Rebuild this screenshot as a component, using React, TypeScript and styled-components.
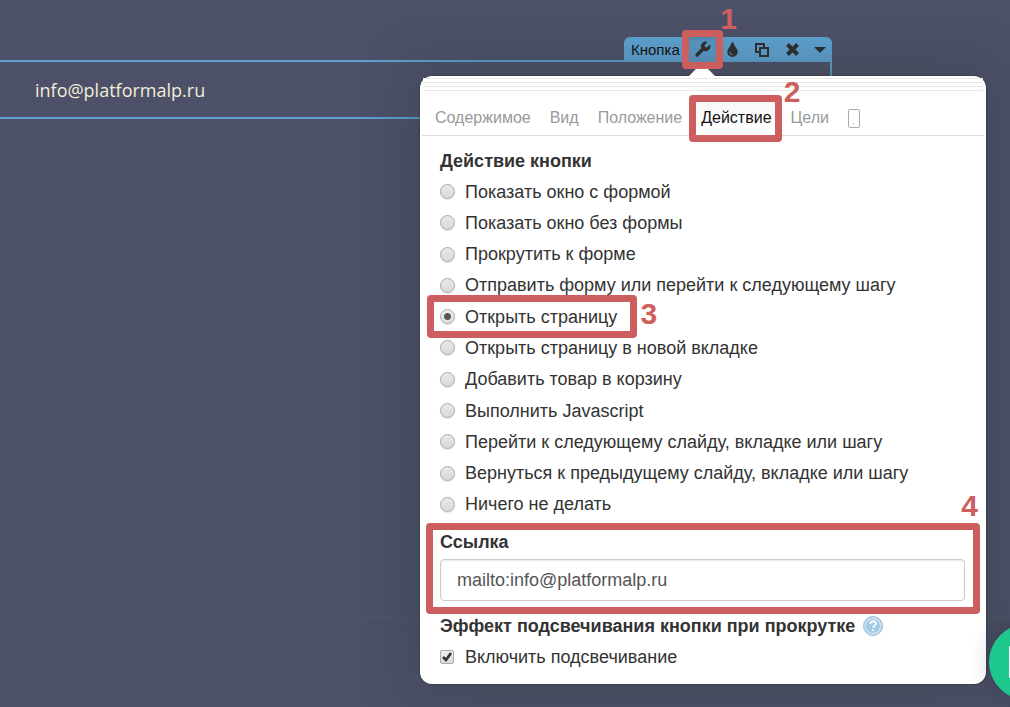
import React, { useState } from 'react';
import styled, { createGlobalStyle } from 'styled-components';
import { FaTint } from 'react-icons/fa';

const sans = '"Liberation Sans", Arial, sans-serif';
const accent = '#5d9fcd';
const marker = '#cc5f5d';

const GlobalStyle = createGlobalStyle`
  *, *::before, *::after { box-sizing: border-box; }
  body { margin: 0; background: #4c5068; font-family: ${sans}; color: #333; }
  button, input { font: inherit; color: inherit; }
`;

const Page = styled.main`
  position: relative;
  min-height: 100vh;
  padding-top: 60px;
  overflow: hidden;
  background: #4c5068;
`;

const SelectedBlock = styled.section`
  position: relative;
  display: flex;
  align-items: center;
  height: 59px;
  margin-right: 178px;
  padding-left: 35px;
  border: solid ${accent};
  border-width: 2px 2px 2px 0;
`;

const MailLink = styled.a`
  color: #f3ecd8;
  font: 18px/24px "Open Sans", "Noto Sans", sans-serif;
  text-decoration: none;
`;

const SectionEdge = styled.hr`
  height: 4px;
  margin: 497px 0 0;
  border: solid #50556a;
  border-width: 1px 0;
`;

const Toolbar = styled.div`
  position: absolute;
  right: -2px;
  bottom: 100%;
  display: flex;
  align-items: center;
  height: 25px;
  padding-left: 7px;
  border-radius: 6px 6px 0 0;
  background: ${accent};
  color: #111;
  font-size: 15px;
`;

const ToolName = styled.span`
  width: 56px;
`;

const ToolButton = styled.button<{ $pressed?: boolean; $narrow?: boolean }>`
  position: relative;
  display: flex;
  align-items: center;
  justify-content: center;
  width: ${p => (p.$narrow ? 25 : 30)}px;
  height: 25px;
  padding: 0;
  border: 0;
  background: ${p => (p.$pressed ? '#5798c5' : 'transparent')};
  box-shadow: ${p => (p.$pressed ? 'inset 0 2px 4px #4a85ad' : 'none')};
  color: #2d2d2d;
`;

const Popover = styled.section`
  position: absolute;
  top: 76px;
  right: 24px;
  width: 566px;
  padding-bottom: 13px;
  border-radius: 12px;
  background: #fff;
  box-shadow: 0 0 50px rgba(50, 60, 60, 0.5), 0 0 2px rgba(0, 0, 0, 0.5);
`;

const Arrow = styled.svg`
  position: absolute;
  top: -12px;
  left: 268px;
`;

const DragHandle = styled.div`
  height: 15px;
  margin: 0 3px;
  padding-top: 2px;
  background: repeating-linear-gradient(#e9e9e9 0 1px, #fff 1px 4px) content-box;
`;

const Tabs = styled.nav`
  display: flex;
  gap: 1px;
  height: 45px;
  margin: 0 2px;
  padding: 10px 0 0 4px;
  border-bottom: 1px solid #ddd;
`;

const Tab = styled.button<{ $active?: boolean }>`
  position: relative;
  display: flex;
  align-items: center;
  padding: 0 9px;
  border: 0;
  background: ${p => (p.$active ? 'linear-gradient(#f7f7f7, #fff)' : 'transparent')};
  color: ${p => (p.$active ? '#111' : '#999')};
  font-size: 16px;
  line-height: 32px;
`;

const Form = styled.form`
  padding: 11px 21px 0 20px;
`;

const Heading = styled.h2`
  display: flex;
  align-items: center;
  gap: 8px;
  margin: 0;
  font-size: 18px;
  line-height: 28px;
`;

const Options = styled.div`
  display: grid;
  grid-auto-rows: 1fr;
  justify-items: start;
  height: 346px;
  padding: 1px 0;
`;

const Choice = styled.label`
  position: relative;
  display: inline-flex;
  align-items: center;
  gap: 10px;
  font-size: 18px;
  line-height: 28px;
`;

const HighlightOption = styled.div`
  display: flex;
  padding-top: 3px;
`;

const Radio = styled.input`
  appearance: none;
  width: 15px;
  height: 15px;
  margin: 0;
  border: 1px solid #aaa;
  border-radius: 50%;
  background: linear-gradient(#e9e9e9, #d9d9d9);
  box-shadow: 0 1px 1px rgba(0, 0, 0, 0.1);
  &:checked {
    background: radial-gradient(circle, #555 0 3px, transparent 4px), linear-gradient(#eee, #ddd);
  }
`;

const CheckBox = styled.span`
  position: relative;
  display: flex;
  width: 15px;
  height: 14px;
  svg { position: absolute; inset: 0; pointer-events: none; }
`;

const CheckInput = styled.input`
  appearance: none;
  width: 14px;
  height: 14px;
  margin: 0;
  border: 1px solid #aaa;
  border-radius: 2px;
  background: linear-gradient(#eee, #dadada);
  & + svg { visibility: hidden; }
  &:checked + svg { visibility: visible; }
`;

const LinkField = styled.div`
  position: relative;
  padding: 7px 0 11px;
`;

const FieldLabel = styled.label`
  display: block;
  font-size: 18px;
  font-weight: bold;
  line-height: 28px;
`;

const TextInput = styled.input`
  display: block;
  width: 100%;
  height: 42px;
  margin-top: 3px;
  padding: 0 16px;
  border: 1px solid #ccc;
  border-radius: 4px;
  background: #fff;
  box-shadow: inset 0 1px 2px rgba(0, 0, 0, 0.1);
  color: #555;
  font-size: 18px;
`;

const HelpButton = styled.button`
  display: flex;
  padding: 0;
  border: 0;
  background: none;
`;

const Ring = styled.span<{ $inset: string }>`
  position: absolute;
  inset: ${p => p.$inset};
  z-index: 2;
  border: 7px solid ${marker};
  border-radius: 4px;
  pointer-events: none;
`;

const Step = styled.b<{ $top: number; $right: number }>`
  position: absolute;
  top: ${p => p.$top}px;
  right: ${p => p.$right}px;
  z-index: 2;
  color: ${marker};
  font: bold 30px/32px ${sans};
  pointer-events: none;
`;

const ChatButton = styled.button`
  position: absolute;
  right: -55px;
  bottom: 7px;
  display: flex;
  align-items: center;
  justify-content: center;
  width: 76px;
  height: 76px;
  padding: 0;
  border: 0;
  border-radius: 50%;
  background: #1ec78b;
  box-shadow: 0 0 24px rgba(0, 0, 0, 0.18);
`;

const actions = [
  'Показать окно с формой',
  'Показать окно без формы',
  'Прокрутить к форме',
  'Отправить форму или перейти к следующему шагу',
  'Открыть страницу',
  'Открыть страницу в новой вкладке',
  'Добавить товар в корзину',
  'Выполнить Javascript',
  'Перейти к следующему слайду, вкладке или шагу',
  'Вернуться к предыдущему слайду, вкладке или шагу',
  'Ничего не делать',
];

const tabs = ['Содержимое', 'Вид', 'Положение', 'Действие', 'Цели'];

export default function App() {
  const [action, setAction] = useState(4);
  const [link, setLink] = useState('mailto:info@platformalp.ru');
  const [highlight, setHighlight] = useState(true);

  return (
    <Page>
      <GlobalStyle />
      <SelectedBlock>
        <MailLink href="mailto:info@platformalp.ru">info@platformalp.ru</MailLink>
        <Toolbar>
          <ToolName>Кнопка</ToolName>
          <ToolButton $pressed aria-label="Настройки">
            <svg width="19" height="19" viewBox="0 0 24 24" fill="currentColor">
              <path d="M14.7 6.3a1 1 0 0 0 0 1.400l1.600 1.600a1 1 0 0 0 1.400 0l3.770-3.770a6 6 0 0 1-7.940 7.940l-6.910 6.910a2.120 2.120 0 0 1-3-3l6.910-6.910a6 6 0 0 1 7.940-7.940z" />
            </svg>
            <Ring $inset="-7px -6px -7px -5px" />
            <Step $top={-34} $right={-20}>1</Step>
          </ToolButton>
          <ToolButton aria-label="Цвет"><FaTint size={15} /></ToolButton>
          <ToolButton aria-label="Копировать">
            <svg width="14" height="14" viewBox="0 0 14 14" fill="none" stroke="currentColor" strokeWidth="2">
              <path d="M4 9H1V1h8v3M5 5h8v8H5z" />
            </svg>
          </ToolButton>
          <ToolButton aria-label="Удалить">
            <svg width="13" height="13" viewBox="0 0 13 13" stroke="currentColor" strokeWidth="4">
              <path d="M1.5 1.5l10 10M11.5 1.5l-10 10" />
            </svg>
          </ToolButton>
          <ToolButton $narrow aria-label="Ещё">
            <svg width="12" height="6" viewBox="0 0 12 6" fill="currentColor"><path d="M0 0h12L6 6z" /></svg>
          </ToolButton>
        </Toolbar>
      </SelectedBlock>
      <SectionEdge />

      <Popover>
        <Arrow width="28" height="13" viewBox="0 0 28 13"><path d="M0 13L13 0h2l13 13z" fill="#fff" /></Arrow>
        <DragHandle />
        <Tabs>
          {tabs.map((name, i) => (
            <Tab key={name} type="button" $active={i === 3}>
              {name}
              {i === 3 && <Ring $inset="-6px -1px -7px -3px" />}
              {i === 3 && <Step $top={-25} $right={-20}>2</Step>}
            </Tab>
          ))}
          <Tab type="button" aria-label="Мобильная версия">
            <svg width="12" height="19" viewBox="0 0 12 19" fill="none" stroke="#aaa">
              <rect x="0.5" y="0.5" width="11" height="18" rx="1.5" />
              <path d="M5 14.500h1" />
            </svg>
          </Tab>
        </Tabs>
        <Form onSubmit={e => e.preventDefault()}>
          <Heading>Действие кнопки</Heading>
          <Options>
            {actions.map((name, i) => (
              <Choice key={name}>
                <Radio type="radio" name="action" checked={action === i} onChange={() => setAction(i)} />
                {name}
                {i === 4 && <Ring $inset="-6px -20px -6px -13px" />}
                {i === 4 && <Step $top={-3} $right={-40}>3</Step>}
              </Choice>
            ))}
          </Options>
          <LinkField>
            <FieldLabel htmlFor="link">Ссылка</FieldLabel>
            <TextInput id="link" value={link} onChange={e => setLink(e.target.value)} />
            <Ring $inset="2px -15px -2px -14px" />
            <Step $top={-31} $right={-13}>4</Step>
          </LinkField>
          <Heading>
            Эффект подсвечивания кнопки при прокрутке
            <HelpButton type="button" aria-label="Справка">
              <svg width="20" height="20" viewBox="0 0 20 20">
                <circle cx="10" cy="10" r="9.5" fill="#b9d8ee" stroke="#9bbfdb" />
                <circle cx="10" cy="10" r="7.500" fill="#a3cae6" stroke="#d3e8f6" />
                <path d="M7.3 8c0-3.700 5.600-3.500 5.600-.4 0 2-2.700 2-2.700 4.200M10.200 13.300v1.800" fill="none" stroke="#fff" strokeWidth="1.800" />
              </svg>
            </HelpButton>
          </Heading>
          <HighlightOption>
            <Choice>
              <CheckBox>
                <CheckInput type="checkbox" checked={highlight} onChange={e => setHighlight(e.target.checked)} />
                <svg width="14" height="14" viewBox="0 0 14 14" fill="none" stroke="#333" strokeWidth="2.600">
                  <path d="M3 7l3 3 5-7" />
                </svg>
              </CheckBox>
              Включить подсвечивание
            </Choice>
          </HighlightOption>
        </Form>
      </Popover>

      <ChatButton aria-label="Чат">
        <svg width="36" height="32" viewBox="0 0 36 32"><rect width="36" height="32" rx="1" fill="#fff" /></svg>
      </ChatButton>
    </Page>
  );
}
